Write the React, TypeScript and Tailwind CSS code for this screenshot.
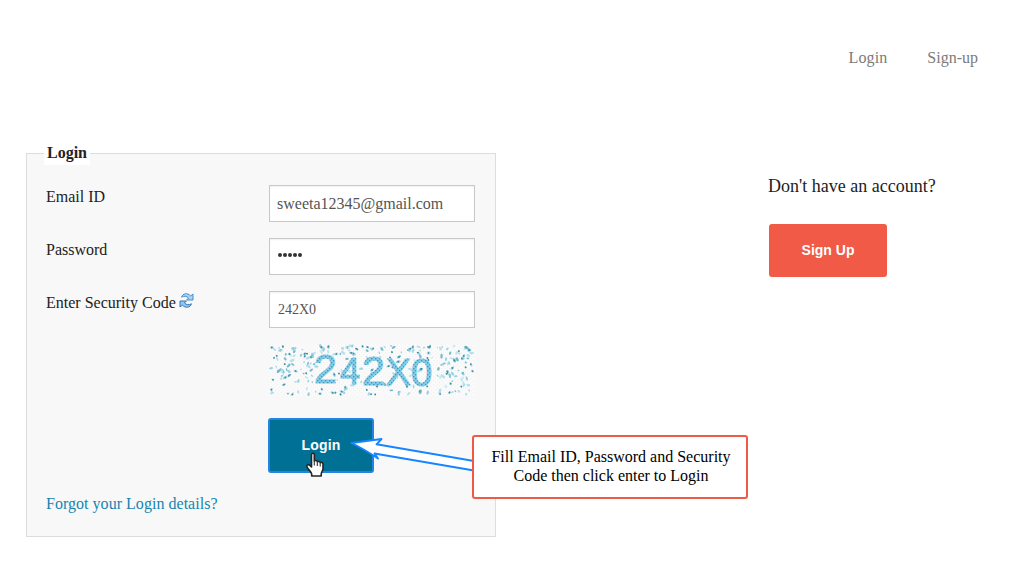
import React from "react";

const speckColours = ["#8fd0e2", "#7cc4da", "#b5e0ea", "#5aabc4", "#a6d9e6"];

function makeSpecks(count: number) {
  let seed = 90217;
  const next = () => {
    seed = (seed + 0x6d2b79f5) | 0;
    let t = Math.imul(seed ^ (seed >>> 15), 1 | seed);
    t = (t + Math.imul(t ^ (t >>> 7), 61 | t)) ^ t;
    return ((t ^ (t >>> 14)) >>> 0) / 4294967296;
  };
  return Array.from({ length: count }, () => ({
    x: next() * 202,
    y: next() * 49,
    r: 0.8 + next() * 1,
    long: 1 + next() * 0.6,
    turn: Math.round(next() * 180),
    c: speckColours[Math.floor(next() * speckColours.length)],
    dark: next() < 0.3,
    keep: next(),
  })).filter((s) => !(s.x > 42 && s.x < 166 && s.y > 8 && s.y < 43) || s.keep < 0.35);
}

const specks = makeSpecks(400);

const glyphs = [
  { t: "2", x: 45, y: 38.5, s: 41 },
  { t: "4", x: 71, y: 39.5, s: 36 },
  { t: "2", x: 93, y: 41, s: 41 },
  { t: "X", x: 117, y: 41, s: 37 },
  { t: "0", x: 142, y: 41.5, s: 38 },
];

function Captcha() {
  return (
    <svg width="206" height="52" viewBox="0 0 206 52" className="block">
      <defs>
        <pattern id="weave" width="4" height="4" patternUnits="userSpaceOnUse">
          <rect width="4" height="4" fill="#84cde8" />
          <rect width="1.4" height="1.4" fill="#3e9abb" />
          <rect x="2" y="2" width="1.4" height="1.4" fill="#3e9abb" />
        </pattern>
        <pattern id="grain" width="4" height="4" patternUnits="userSpaceOnUse">
          <rect width="4" height="4" fill="#fafafa" />
          <rect width="1" height="1" fill="#eff2f2" />
          <rect x="2" y="2" width="1" height="1" fill="#eff2f2" />
        </pattern>
      </defs>
      <rect width="206" height="52" fill="url(#grain)" />
      {specks.map((s, i) => (
        <g key={i} transform={`translate(${s.x + 2} ${s.y + 1.5}) rotate(${s.turn})`}>
          <ellipse rx={s.r * s.long} ry={s.r * 0.75} fill={s.c} opacity="0.8" />
          {s.dark && <circle r="0.9" fill="#3f8ba1" />}
        </g>
      ))}
      <g fontFamily="Liberation Sans, Arial, sans-serif" fill="url(#weave)" stroke="url(#weave)" strokeWidth="1.1">
        {glyphs.map((g) => (
          <text key={g.x} x={g.x} y={g.y} fontSize={g.s}>
            {g.t}
          </text>
        ))}
      </g>
    </svg>
  );
}

function RefreshIcon() {
  return (
    <svg width="15" height="15" viewBox="0 0 15 15" className="block">
      <g strokeWidth="1" strokeLinejoin="round">
        <path
          d="M2.6 4.2C3.6.3 8.6-.5 11.7 2.9L14 1V7H7.6L9.6 5C7.6 3 5 2.7 2.6 4.2Z"
          fill="#a5d5f8"
          stroke="#478bc9"
        />
        <path
          d="M12.4 10.8C11.4 14.7 6.4 15.5 3.3 12.1L1 14V8H7.4L5.4 10C7.4 12 10 12.3 12.4 10.8Z"
          fill="#90c8f2"
          stroke="#3677b7"
        />
      </g>
    </svg>
  );
}

function Field({ children }: { children: React.ReactNode }) {
  return (
    <div className="flex h-[37px] w-[206px] items-center border border-[#c8c8c8] bg-white px-2 shadow-[inset_0_1px_2px_rgba(0,0,0,0.06)]">
      {children}
    </div>
  );
}

function Row({ label, children }: { label: React.ReactNode; children: React.ReactNode }) {
  return (
    <div className="flex h-[53px] items-start">
      <div className="flex w-[223px] pt-px leading-[22px]">{label}</div>
      {children}
    </div>
  );
}

export default function App() {
  return (
    <div className="relative h-[565px] w-[1030px] overflow-hidden bg-white font-['Liberation_Serif',serif] text-base text-[#222]">
      <nav className="flex h-[153px] items-start justify-end gap-10 pt-[46px] pr-[52px] leading-6 text-[#7b7b7b]">
        <a className="tracking-[0.1px]">Login</a>
        <a>Sign-up</a>
      </nav>
      <main className="flex items-start pl-[26px]">
        <section className="relative h-[384px] w-[470px] border border-[#dddddd] bg-[#f8f8f8] pt-[31px] pl-[19px]">
          <h2 className="absolute -top-[13px] left-[17px] h-[24px] bg-white px-[3px] leading-[24px] font-bold">
            Login
          </h2>
          <Row label="Email ID">
            <Field>
              <span className="-ml-px text-[#555]">sweeta12345@gmail.com</span>
            </Field>
          </Row>
          <Row label="Password">
            <Field>
              <span className="flex gap-px pb-[3px]">
                {[0, 1, 2, 3, 4].map((n) => (
                  <span key={n} className="size-1 rounded-full bg-[#333]" />
                ))}
              </span>
            </Field>
          </Row>
          <Row
            label={
              <>
                Enter Security Code
                <span className="ml-[3px] pt-px">
                  <RefreshIcon />
                </span>
              </>
            }
          >
            <Field>
              <span className="text-sm text-[#555]">242X0</span>
            </Field>
          </Row>
          <div className="ml-[223px]">
            <Captcha />
            <button className="mt-[22px] -ml-px block h-[55px] w-[106px] rounded-[3px] border-2 border-[#2484e6] bg-[#007095] pb-0.5 font-['Liberation_Sans',sans-serif] text-sm font-bold tracking-[0.2px] text-white">
              Login
            </button>
          </div>
          <a className="mt-[19px] block leading-6 tracking-[0.03px] text-[#1585b0]">Forgot your Login details?</a>
        </section>
        <aside className="ml-[272px] pt-[21px]">
          <p className="text-lg leading-6">Don't have an account?</p>
          <button className="mt-[26px] ml-px h-[53px] w-[118px] rounded-[3px] bg-[#f05a46] pb-0.5 font-['Liberation_Sans',sans-serif] text-sm font-bold text-white">
            Sign Up
          </button>
        </aside>
      </main>
      <svg width="124" height="40" viewBox="0 0 124 40" className="absolute top-[435px] left-[350px]">
        <path
          d="M1.5 8 31.5 4 26.5 9.3 124 26V35.5L24.5 18.5 28 23.5Q14 14 1.5 8Z"
          fill="#fff"
          stroke="#1685ff"
          strokeWidth="1.9"
          strokeLinejoin="round"
        />
      </svg>
      <svg width="20" height="26" viewBox="0 0 20 26" className="absolute top-[452px] left-[305px]">
        <path
          d="M6.5 15V2.8C6.5.8 9.3.8 9.3 2.8V9c.9-1 2.9-.6 3 .8.9-.9 2.7-.4 2.9.8 1.1-.7 2.8.1 2.8 1.6v4.6c0 2.4-1.8 3-1.8 5.7V24H6.7v-1.8c-.3-2.6-3.5-4.4-4.7-7.4-.8-2.1 1.5-2.9 2.9-1.4Z"
          fill="#fff"
          stroke="#252525"
          strokeWidth="1.6"
          strokeLinejoin="round"
        />
        <path d="M9.3 9v4.5M12.3 10v4M15.2 11v3.5" stroke="#333" strokeWidth="1.1" />
      </svg>
      <div className="absolute top-[435px] left-[472px] flex h-[64px] w-[276px] items-center justify-center rounded-[3px] border-2 border-[#ef5945] bg-white pb-0.5 pl-0.5 text-center leading-[19px] text-black">
        <p>
          Fill Email ID, Password and Security
          <br />
          Code then click enter to Login
        </p>
      </div>
    </div>
  );
}
